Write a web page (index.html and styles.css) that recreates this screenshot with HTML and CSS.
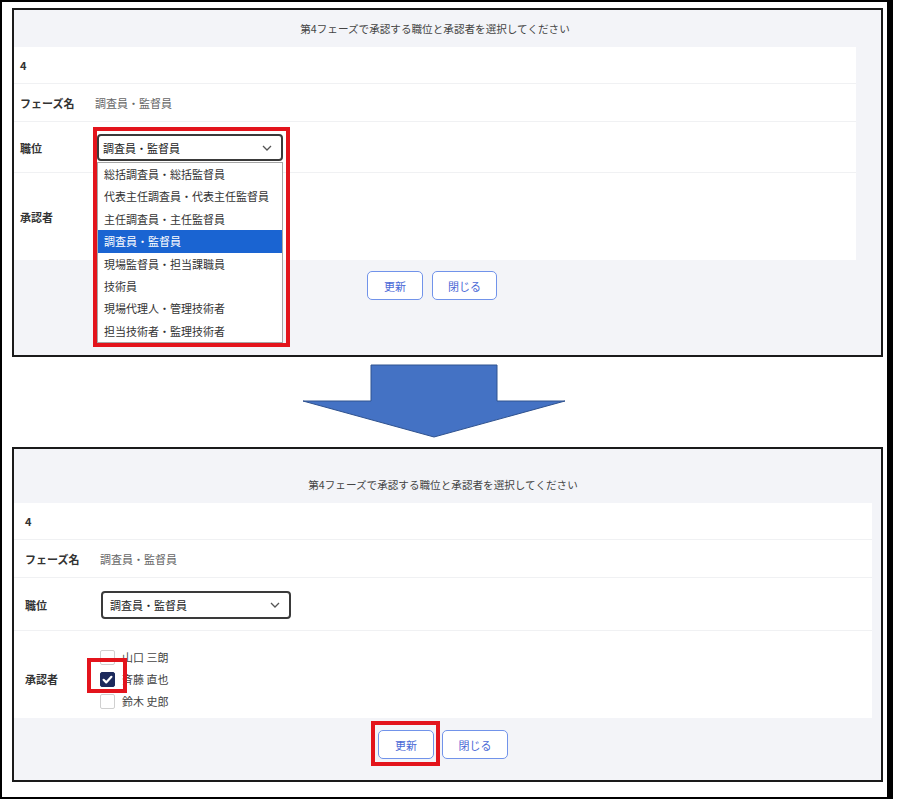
FILE: index.html
```html
<!DOCTYPE html>
<html>
<head>
  <meta charset="utf-8">
  <link rel="stylesheet" href="styles.css">
</head>
<body>
  <div class="frame">
    <!-- before: position dropdown opened -->
    <section class="panel panel-top">
      <div class="content">
        <div class="title">第4フェーズで承認する職位と承認者を選択してください</div>
        <div class="table">
          <div class="row row-no"><div class="label">4</div></div>
          <div class="row row-name"><div class="label">フェーズ名</div><div class="value">調査員・監督員</div></div>
          <div class="row row-select">
            <div class="label">職位</div>
            <div class="select-wrap">
              <div class="select">
                <span>調査員・監督員</span>
                <svg width="10" height="6" viewBox="0 0 10 6"><path d="M1 1l4 4 4-4" fill="none" stroke="#555" stroke-width="1.3"/></svg>
              </div>
              <ul class="options">
                <li>総括調査員・総括監督員</li>
                <li>代表主任調査員・代表主任監督員</li>
                <li>主任調査員・主任監督員</li>
                <li class="selected">調査員・監督員</li>
                <li>現場監督員・担当課職員</li>
                <li>技術員</li>
                <li>現場代理人・管理技術者</li>
                <li>担当技術者・監理技術者</li>
              </ul>
              <div class="mark mark-list"></div>
            </div>
          </div>
          <div class="row row-approver">
            <div class="label">承認者</div>
          </div>
        </div>
        <div class="actions">
          <button class="btn btn-update">更新</button>
          <button class="btn btn-close">閉じる</button>
        </div>
      </div>
      <div class="gutter"></div>
    </section>

    <div class="arrow">
      <svg width="266" height="75" viewBox="0 0 266 75"><polygon points="70,1 196,1 196,37 264,37 133,73 2,37 70,37" fill="#4472c4" stroke="#2f528f" stroke-width="1"/></svg>
    </div>

    <!-- after: approver checked, ready to update -->
    <section class="panel panel-bottom">
      <div class="content">
        <div class="title">第4フェーズで承認する職位と承認者を選択してください</div>
        <div class="table">
          <div class="row row-no"><div class="label">4</div></div>
          <div class="row row-name"><div class="label">フェーズ名</div><div class="value">調査員・監督員</div></div>
          <div class="row row-select">
            <div class="label">職位</div>
            <div class="select-wrap">
              <div class="select">
                <span>調査員・監督員</span>
                <svg width="10" height="6" viewBox="0 0 10 6"><path d="M1 1l4 4 4-4" fill="none" stroke="#555" stroke-width="1.3"/></svg>
              </div>
            </div>
          </div>
          <div class="row row-approver">
            <div class="label">承認者</div>
            <div class="checks">
              <label class="check"><span class="box"></span>山口 三朗</label>
              <label class="check checked">
                <span class="box"><svg width="15" height="15" viewBox="0 0 15 15"><path d="M3.6 7.8l2.6 2.6 5.2-5.6" fill="none" stroke="#fff" stroke-width="2.2" stroke-linecap="round" stroke-linejoin="round"/></svg></span>斉藤 直也
                <span class="mark mark-check"></span>
              </label>
              <label class="check"><span class="box"></span>鈴木 史郎</label>
            </div>
          </div>
        </div>
        <div class="actions">
          <button class="btn btn-update">更新<span class="mark mark-btn"></span></button>
          <button class="btn btn-close">閉じる</button>
        </div>
      </div>
      <div class="gutter"></div>
    </section>
  </div>
</body>
</html>
```

FILE: styles.css
```css
body{margin:0;background:#fff;font-family:"Noto Sans CJK JP","Noto Sans",sans-serif;font-size:11px;color:#333}
.frame{width:885px;height:795px;border:2px solid #000;border-right-width:6px}
.panel{display:flex;margin-left:10px;width:867px;border:2px solid #1a1a1a;background:#f3f4f8}
.panel-top{margin-top:6px;height:345px}
.panel-bottom{height:331px}
.content{display:flex;flex-direction:column}
.panel-top .content{width:842px}
.panel-bottom .content{width:858px}
.gutter{flex:1}
.title{text-align:center;line-height:14px;color:#444;font-size:10.6px}
.panel-top .title{padding:12px 0 11px}
.panel-bottom .title{padding:29px 0 11px}
.table{background:#fff}
.row{display:flex;align-items:center;box-sizing:border-box;border-bottom:1px solid #f0f1f3}
.row-no{height:37px}
.row-name{height:38px}
.label{width:75px;font-weight:700;color:#333;flex:none}
.panel-top .row{padding-left:6px}
.panel-bottom .row{padding-left:11px}
.value{color:#666}
.row-select{padding-top:12px;padding-bottom:11px}
.panel-bottom .row-select{padding-top:13px}
.select-wrap{position:relative;margin-left:2px}
.select{display:flex;align-items:center;justify-content:space-between;box-sizing:border-box;width:186px;height:27px;padding:0 9px 0 4px;border:2px solid #3a3a3a;border-radius:4px;background:#fff;color:#222}
.panel-bottom .select-wrap{margin-left:1px}
.panel-bottom .select{width:190px;height:28px;padding-left:7px}
.options{position:absolute;top:calc(100% + 1px);left:0;width:186px;box-sizing:border-box;margin:0;padding:0;list-style:none;background:#fff;border:1px solid #a6a6a6;z-index:2}
.options li{height:22.4px;line-height:22.4px;padding-left:6px;color:#333}
.options .selected{background:#1a64d2;color:#fff}
.row-approver{height:87px;border-bottom:none}
.panel-bottom .row-approver{padding-top:9px}
.checks{display:flex;flex-direction:column}
.check{position:relative;display:flex;align-items:center;gap:7px;height:22px;color:#444}
.box{display:block;width:13px;height:13px;border:1px solid #d0d0d0;border-radius:2px;background:#fff}
.checked .box{background:#1c2a5c;border-color:#1c2a5c}
.box svg{display:block;margin:-1px}
.actions{display:flex;justify-content:center;gap:9px;margin-top:11px}
.panel-top .actions{padding-right:6px}
.panel-bottom .actions{margin-top:12px;gap:8px}
.btn{position:relative;height:29px;padding:0;background:#fff;border:1px solid #7193ea;border-radius:5px;color:#4a68d6;font-family:inherit;font-size:11px}
.btn-update{width:56px}
.btn-close{width:65px}
.panel-bottom .btn-close{width:66px}
.arrow{height:90px;padding-left:299px;box-sizing:border-box;padding-top:7px}
.arrow svg{display:block}
.mark{position:absolute;box-sizing:border-box;border:4px solid #e3141c;z-index:3;pointer-events:none}
.mark-list{top:-7px;left:-4px;width:197px;height:220px}
.mark-check{top:-10px;left:-13px;width:40px;height:35px}
.mark-btn{top:-10px;left:-8px;width:69px;height:45px}
```
